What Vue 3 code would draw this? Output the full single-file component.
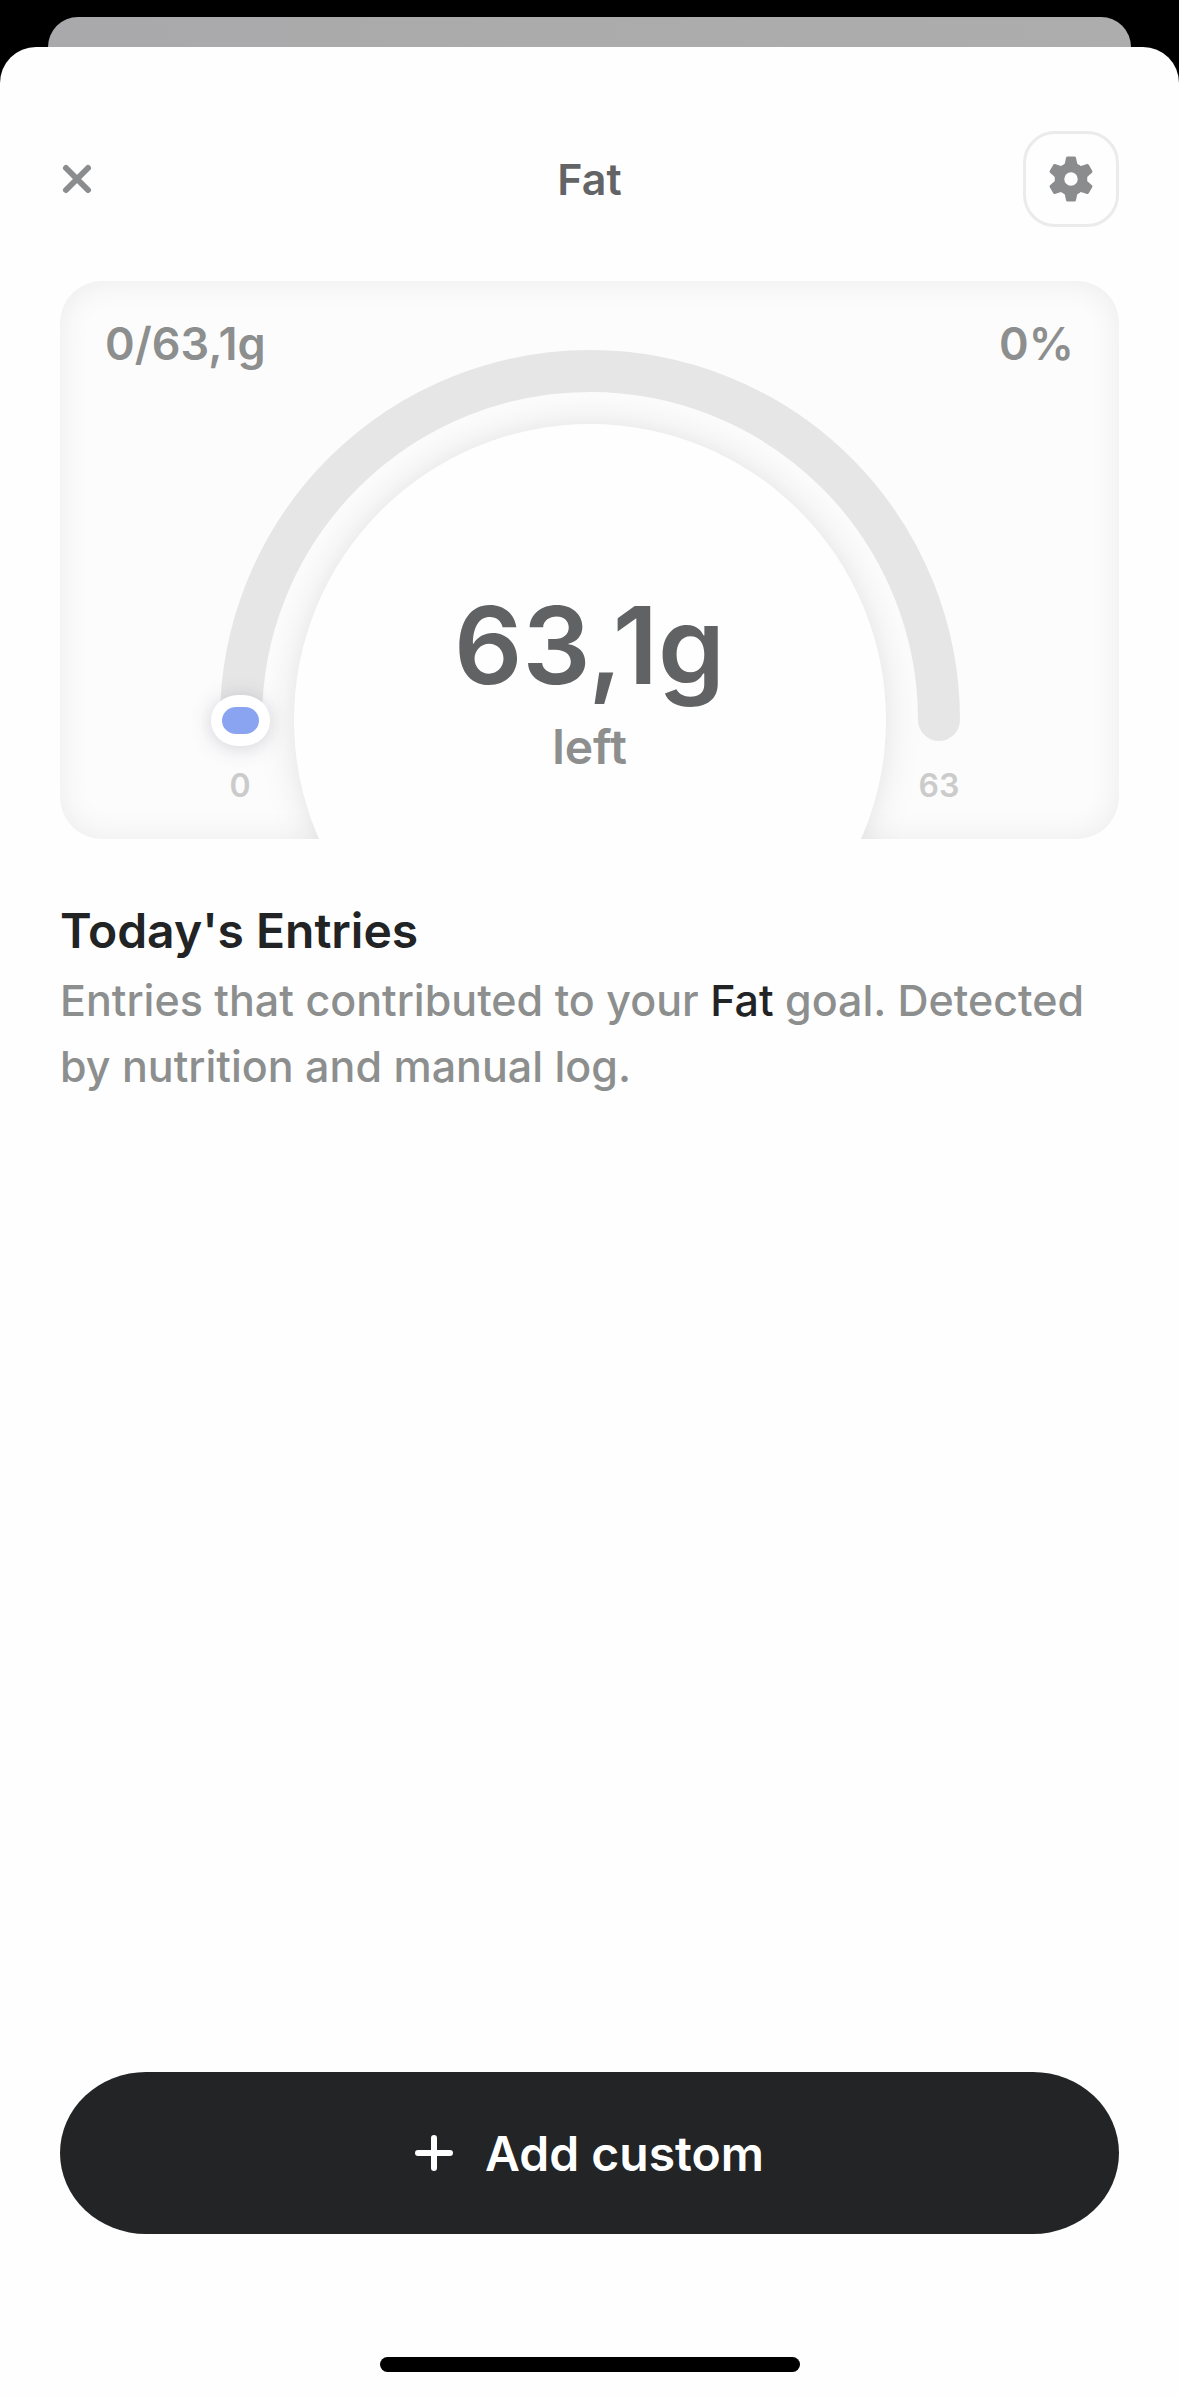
<script setup>
import { ref, computed } from 'vue';

const goal = ref(63.1);
const consumed = ref(0);

// Decimal comma, without trailing zeros
const format = (value) => String(Math.round(value * 10) / 10).replace('.', ',');

const ratio = computed(() => Math.min(consumed.value / goal.value, 1));
const percent = computed(() => Math.round(ratio.value * 100));
const left = computed(() => format(goal.value - consumed.value));

// The thumb turns around the gauge centre, 180 degrees for a full goal
const thumbRotation = computed(() => `rotate(${ratio.value * 180} 530 439)`);

const teeth = [0, 60, 120, 180, 240, 300];
</script>

<template>
    <div class="screen">
        <div class="peek"></div>
        <main class="sheet">
            <header class="header">
                <button class="close" type="button" aria-label="Close">
                    <svg width="34" height="34" viewBox="0 0 34 34">
                        <path d="M6 6 28 28M28 6 6 28" />
                    </svg>
                </button>
                <h1 class="title">Fat</h1>
                <button class="settings" type="button" aria-label="Settings">
                    <svg width="48" height="48" viewBox="-24 -24 48 48">
                        <circle r="11.5" />
                        <path
                            v-for="angle in teeth"
                            :key="angle"
                            :transform="`rotate(${angle})`"
                            d="M-3.5 -21H3.5L4.8 -15Q5.5 -13 8 -12L5 -10H-5L-8 -12Q-5.5 -13 -4.8 -15Z"
                        />
                    </svg>
                </button>
            </header>

            <section class="card">
                <svg class="gauge" viewBox="0 0 1059 558">
                    <defs>
                        <radialGradient id="halo" gradientUnits="userSpaceOnUse" cx="530" cy="439" r="334">
                            <stop offset="0.88" stop-color="#000" stop-opacity="0.06" />
                            <stop offset="0.92" stop-color="#000" stop-opacity="0.025" />
                            <stop offset="0.96" stop-color="#000" stop-opacity="0.007" />
                            <stop offset="1" stop-color="#000" stop-opacity="0" />
                        </radialGradient>
                    </defs>
                    <circle cx="530" cy="439" r="334" fill="url(#halo)" />
                    <circle class="hole" cx="530" cy="439" r="296" />
                    <path class="track" d="M181 439A349 349 0 0 1 879 439" />
                    <g :transform="thumbRotation">
                        <rect class="thumb" x="151" y="414" width="59" height="51" rx="27" ry="25" />
                        <rect class="thumb-core" x="162" y="426" width="37" height="27" rx="14" />
                    </g>
                    <text class="scale" x="180" y="516">0</text>
                    <text class="scale" x="879" y="516">{{ Math.round(goal) }}</text>
                </svg>
                <div class="readings">
                    <span>{{ format(consumed) }}/{{ format(goal) }}g</span>
                    <span>{{ percent }}%</span>
                </div>
                <div class="remaining">
                    <strong class="amount">{{ left }}g</strong>
                    <span class="caption">left</span>
                </div>
            </section>

            <section class="entries">
                <h2 class="entries-title">Today's Entries</h2>
                <p class="entries-text">
                    Entries that contributed to your <b>Fat</b> goal. Detected by nutrition and manual log.
                </p>
            </section>

            <footer class="footer">
                <button class="add" type="button">
                    <svg width="38" height="38" viewBox="0 0 38 38">
                        <path d="M19 4V34M3 19H35" />
                    </svg>
                    Add custom
                </button>
                <div class="home-indicator"></div>
            </footer>
        </main>
    </div>
</template>

<style>
body {
    background: #000;
}
</style>

<style scoped>
.screen {
    display: flex;
    flex-direction: column;
    box-sizing: border-box;
    min-height: 100vh;
    padding-top: 17px;
    background: #000;
    font-family: Inter, "Liberation Sans", sans-serif;
}

/* Edge of the sheet underneath */
.peek {
    height: 30px;
    margin: 0 48px;
    border-radius: 30px 30px 0 0;
    background: linear-gradient(90deg, #a9a8ab, #ababab 40%, #adadad);
}

.sheet {
    display: flex;
    flex: 1;
    flex-direction: column;
    padding: 84px 60px 24px;
    border-radius: 36px 36px 0 0;
    background: #fefefe;
}

button {
    padding: 0;
    border: 0;
    background: none;
    font: inherit;
    cursor: pointer;
}

.header {
    display: grid;
    grid-template-columns: 96px 1fr 96px;
    align-items: center;
}

.close {
    display: flex;
    justify-self: start;
}

.close path {
    fill: none;
    stroke: #8b8c8d;
    stroke-width: 6;
    stroke-linecap: round;
}

.title {
    margin: 0;
    color: #636465;
    font-size: 43px;
    font-weight: 600;
    line-height: 60px;
    text-align: center;
}

.settings {
    display: flex;
    align-items: center;
    justify-content: center;
    box-sizing: border-box;
    height: 96px;
    border: 3px solid #ebebeb;
    border-radius: 32px;
}

.settings circle {
    fill: none;
    stroke: #8b8c8d;
    stroke-width: 9.5;
}

.settings path {
    fill: #8b8c8d;
    stroke: #8b8c8d;
    stroke-width: 3;
    stroke-linejoin: round;
}

/* All layers of the card share one grid cell */
.card {
    display: grid;
    margin-top: 54px;
    overflow: hidden;
    border-radius: 42px;
    background: #fcfcfc;
    box-shadow: inset 0 0 32px rgba(0, 0, 0, 0.07);
}

.card > * {
    grid-area: 1 / 1;
}

.gauge {
    display: block;
    width: 100%;
}

.hole {
    fill: #fefefe;
}

.track {
    fill: none;
    stroke: #e6e6e6;
    stroke-width: 42;
    stroke-linecap: round;
}

.thumb {
    fill: #fff;
    filter: drop-shadow(0 2px 10px rgba(40, 40, 80, 0.2));
}

.thumb-core {
    fill: #8aa4f1;
}

.scale {
    fill: #cbcbcb;
    font-size: 32px;
    font-weight: 600;
    text-anchor: middle;
}

.readings {
    display: flex;
    justify-content: space-between;
    padding: 33px 45px;
    color: #8d8e8e;
    font-size: 45px;
    font-weight: 600;
    line-height: 60px;
}

.remaining {
    display: flex;
    flex-direction: column;
    align-self: end;
    align-items: center;
    gap: 12px;
    padding-bottom: 62px;
}

.amount {
    color: #606263;
    font-size: 107px;
    font-weight: 600;
    line-height: 120px;
}

.caption {
    color: #8d8e8e;
    font-size: 48px;
    font-weight: 600;
    line-height: 60px;
}

.entries {
    margin-top: 62px;
}

.entries-title {
    margin: 0;
    color: #222324;
    font-size: 48px;
    font-weight: 600;
    line-height: 60px;
}

.entries-text {
    margin: 6px 0 0;
    color: #8d8e8e;
    font-size: 43px;
    font-weight: 500;
    line-height: 66px;
}

.entries-text b {
    color: #222324;
    font-weight: 500;
}

.footer {
    display: flex;
    flex-direction: column;
    align-items: center;
    gap: 123px;
    margin-top: auto;
}

.add {
    display: flex;
    align-items: center;
    justify-content: center;
    gap: 32px;
    width: 100%;
    height: 162px;
    border-radius: 86px / 81px;
    background: #222425;
    color: #fff;
    font-size: 48px;
    font-weight: 600;
}

.add path {
    fill: none;
    stroke: #fff;
    stroke-width: 6;
    stroke-linecap: round;
}

.home-indicator {
    width: 420px;
    height: 15px;
    border-radius: 8px;
    background: #000;
}
</style>
